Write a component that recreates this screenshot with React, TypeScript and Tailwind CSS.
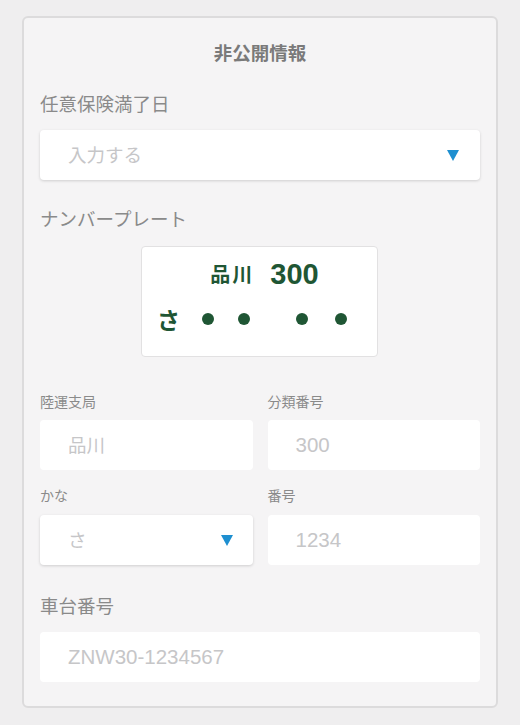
import React from "react";

function Tri() {
  return (
    <svg width="12" height="11" viewBox="0 0 12 11" className="shrink-0">
      <polygon points="0,0 12,0 6,11" fill="#1e8fd0" />
    </svg>
  );
}

function Dot({ cls }: { cls: string }) {
  return <span className={"block w-[12px] h-[12px] rounded-full bg-[#1f5634] " + cls} />;
}

export default function App() {
  return (
    <div className="w-[520px] h-[725px] bg-[#efeeef] pt-[16px] px-[22px] overflow-hidden font-['Noto_Sans_CJK_JP','Noto_Sans',sans-serif]">
      <div className="border-2 border-[#dcdbdc] rounded-[6px] bg-[#f5f4f5] px-[16px] pt-[22px] pb-[24px]">
        <div className="text-center text-[18.5px] leading-[24px] font-bold text-[#7a7a7a]">非公開情報</div>

        <div className="mt-[27px] text-[18.5px] leading-[24px] text-[#8a8a8a]">任意保険満了日</div>
        <div className="mt-[15px] h-[50px] bg-white rounded-[4px] shadow-[0_1px_3px_rgba(0,0,0,0.16)] flex items-center pl-[28px] pr-[21px]">
          <span className="flex-1 text-[18.5px] text-[#c6c6c8]">入力する</span>
          <Tri />
        </div>

        <div className="mt-[26px] text-[18.5px] leading-[24px] text-[#8a8a8a]">ナンバープレート</div>
        <div className="mt-[16px] ml-[101px] w-[237px] h-[111px] bg-white border border-[#e2e1e2] rounded-[4px] flex flex-col">
          <div className="flex items-center justify-center gap-[16px] mt-[13px] h-[28px] pl-[10px] text-[#1f5634]">
            <span className="text-[20px] font-bold leading-[28px] tracking-[2px]">品川</span>
            <span className="text-[29px] font-bold leading-[28px] font-['Liberation_Sans',sans-serif]">300</span>
          </div>
          <div className="flex items-center mt-[17px] h-[28px] pl-[15px] text-[#1f5634]">
            <span className="text-[23px] font-bold leading-[28px] w-[22px]">さ</span>
            <Dot cls="ml-[23px]" />
            <Dot cls="ml-[24px]" />
            <Dot cls="ml-[46px]" />
            <Dot cls="ml-[27px]" />
          </div>
        </div>

        <div className="mt-[34px] grid grid-cols-2 gap-x-[15px]">
          <div>
            <div className="text-[14px] leading-[20px] text-[#8a8a8a]">陸運支局</div>
            <div className="mt-[9px] h-[50px] bg-white rounded-[4px] flex items-center pl-[28px]">
              <span className="text-[18.5px] text-[#c6c6c8]">品川</span>
            </div>
          </div>
          <div>
            <div className="text-[14px] leading-[20px] text-[#8a8a8a]">分類番号</div>
            <div className="mt-[9px] h-[50px] bg-white rounded-[4px] flex items-center pl-[28px]">
              <span className="text-[20.5px] text-[#c6c6c8] font-['Liberation_Sans',sans-serif]">300</span>
            </div>
          </div>
          <div className="mt-[15px]">
            <div className="text-[14px] leading-[20px] text-[#8a8a8a]">かな</div>
            <div className="mt-[10px] h-[50px] bg-white rounded-[4px] shadow-[0_1px_3px_rgba(0,0,0,0.16)] flex items-center pl-[28px] pr-[20px]">
              <span className="flex-1 text-[18.5px] text-[#c6c6c8]">さ</span>
              <Tri />
            </div>
          </div>
          <div className="mt-[15px]">
            <div className="text-[14px] leading-[20px] text-[#8a8a8a]">番号</div>
            <div className="mt-[10px] h-[50px] bg-white rounded-[4px] flex items-center pl-[28px]">
              <span className="text-[20.5px] text-[#c6c6c8] font-['Liberation_Sans',sans-serif]">1234</span>
            </div>
          </div>
        </div>

        <div className="mt-[28px] text-[18.5px] leading-[24px] text-[#8a8a8a]">車台番号</div>
        <div className="mt-[15px] h-[50px] bg-white rounded-[4px] flex items-center pl-[28px]">
          <span className="text-[20.5px] text-[#c6c6c8] font-['Liberation_Sans',sans-serif]">ZNW30-1234567</span>
        </div>
      </div>
    </div>
  );
}
